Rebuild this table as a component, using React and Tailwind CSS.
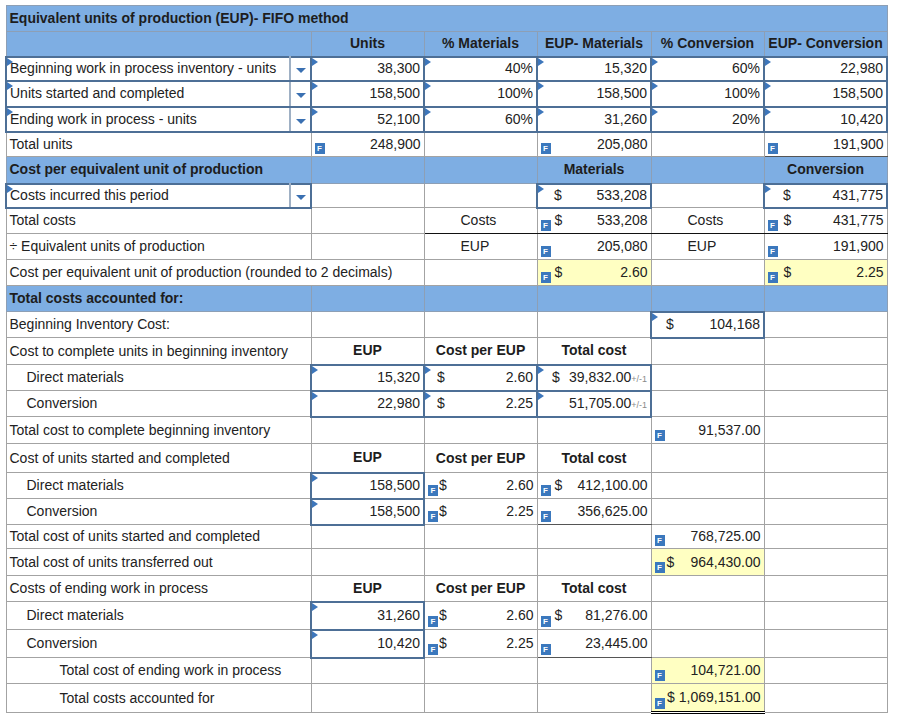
import React from "react";

const blueRow = "bg-[#7eaee3]";

function Tri() {
  return (
    <span className="absolute left-0 top-0 h-0 w-0 border-y-[4px] border-l-[6px] border-y-transparent border-l-[#3d76bb]" />
  );
}

function FBadge() {
  return (
    <span className="absolute bottom-[2px] left-[3px] flex h-[11px] w-[10px] items-center justify-center bg-[#3b78bd] text-[8px] font-bold leading-none text-white">
      F
    </span>
  );
}

function Caret() {
  return (
    <span className="inline-block h-0 w-0 border-x-[5px] border-t-[5px] border-x-transparent border-t-[#3a70b2]" />
  );
}

function Cell({ children, className = "", input, tri, f, yellow, blue, colSpan }) {
  let border = "border border-[#a3a3a3]";
  if (blue) border = "border border-[#8d9fb5] bg-[#7eaee3]";
  if (input) border = "border-2 border-[#4d6f96]";
  return (
    <td
      colSpan={colSpan}
      className={`relative p-0 ${border} ${yellow ? "bg-[#ffffc2]" : ""} ${className}`}
    >
      {tri && <Tri />}
      {f && <FBadge />}
      {children}
    </td>
  );
}

function Num({ children }) {
  return <div className="pr-[3px] text-right">{children}</div>;
}

function Dollar({ value, pl = "pl-[14px]", extra }) {
  return (
    <div className={`flex items-center justify-between pr-[3px] ${pl}`}>
      <span>$</span>
      <span>
        {value}
        {extra}
      </span>
    </div>
  );
}

const Plus = () => <span className="text-[9px] text-[#8a8a8a]">+/-1</span>;

function Label({ children, indent = "pl-[3px]" }) {
  return <div className={`whitespace-nowrap ${indent}`}>{children}</div>;
}

function Head({ children }) {
  return <div className="text-center font-bold text-[#1d1d1d]">{children}</div>;
}

function InputRow({ h, label, units, pm, em, pc, ec }) {
  return (
    <tr className={h}>
      <Cell input tri className="border-r-[#9fb0c4]">
        <Label>{label}</Label>
      </Cell>
      <Cell input className="text-center">
        <Caret />
      </Cell>
      <Cell input tri><Num>{units}</Num></Cell>
      <Cell input tri><Num>{pm}</Num></Cell>
      <Cell input tri><Num>{em}</Num></Cell>
      <Cell input tri><Num>{pc}</Num></Cell>
      <Cell input tri><Num>{ec}</Num></Cell>
    </tr>
  );
}

function Empty({ n = 1 }) {
  return Array.from({ length: n }).map((_, i) => <Cell key={i} />);
}

export default function App() {
  return (
    <div className="bg-white pl-[5px] pt-[5px] font-['Liberation_Sans',Arial,sans-serif] text-[14px] text-[#222]">
      <table className="w-[881px] table-fixed border-collapse">
        <colgroup>
          <col className="w-[284px]" />
          <col className="w-[21px]" />
          <col className="w-[113px]" />
          <col className="w-[113px]" />
          <col className="w-[114px]" />
          <col className="w-[113px]" />
          <col className="w-[123px]" />
        </colgroup>
        <tbody>
          <tr className="h-[26px]">
            <Cell blue colSpan={7}>
              <div className="pl-[3px] font-bold text-[#1d1d1d]">
                Equivalent units of production (EUP)- FIFO method
              </div>
            </Cell>
          </tr>
          <tr className="h-[25px]">
            <Cell blue colSpan={2} />
            <Cell blue><Head>Units</Head></Cell>
            <Cell blue><Head>% Materials</Head></Cell>
            <Cell blue><Head>EUP- Materials</Head></Cell>
            <Cell blue><Head>% Conversion</Head></Cell>
            <Cell blue><Head>EUP- Conversion</Head></Cell>
          </tr>
          <InputRow h="h-[24px]" label="Beginning work in process inventory - units" units="38,300" pm="40%" em="15,320" pc="60%" ec="22,980" />
          <InputRow h="h-[26px]" label="Units started and completed" units="158,500" pm="100%" em="158,500" pc="100%" ec="158,500" />
          <InputRow h="h-[25px]" label="Ending work in process - units" units="52,100" pm="60%" em="31,260" pc="20%" ec="10,420" />
          <tr className="h-[25px]">
            <Cell colSpan={2}><Label>Total units</Label></Cell>
            <Cell f><Num>248,900</Num></Cell>
            <Cell />
            <Cell f><Num>205,080</Num></Cell>
            <Cell />
            <Cell f className="border-b-[#555]"><Num>191,900</Num></Cell>
          </tr>

          <tr className="h-[27px]">
            <Cell blue colSpan={2}>
              <div className="pl-[3px] font-bold text-[#1d1d1d]">Cost per equivalent unit of production</div>
            </Cell>
            <Cell blue />
            <Cell blue />
            <Cell blue><Head>Materials</Head></Cell>
            <Cell blue />
            <Cell blue><Head>Conversion</Head></Cell>
          </tr>
          <tr className="h-[24px]">
            <Cell input tri className="border-r-[#9fb0c4]">
              <Label>Costs incurred this period</Label>
            </Cell>
            <Cell input className="text-center">
              <Caret />
            </Cell>
            <Empty n={2} />
            <Cell input tri><Dollar value="533,208" pl="pl-[16px]" /></Cell>
            <Cell />
            <Cell input tri><Dollar value="431,775" pl="pl-[18px]" /></Cell>
          </tr>
          <tr className="h-[26px]">
            <Cell colSpan={2}><Label>Total costs</Label></Cell>
            <Cell />
            <Cell className="border-b-[#111]"><div className="pl-[36px]">Costs</div></Cell>
            <Cell f className="border-b-[#111]"><Dollar value="533,208" pl="pl-[17px]" /></Cell>
            <Cell className="border-b-[#111]"><div className="pl-[36px]">Costs</div></Cell>
            <Cell f className="border-b-[#111]"><Dollar value="431,775" pl="pl-[19px]" /></Cell>
          </tr>
          <tr className="h-[26px]">
            <Cell colSpan={2}><Label>÷ Equivalent units of production</Label></Cell>
            <Cell />
            <Cell><div className="pl-[36px]">EUP</div></Cell>
            <Cell f><Num>205,080</Num></Cell>
            <Cell><div className="pl-[36px]">EUP</div></Cell>
            <Cell f><Num>191,900</Num></Cell>
          </tr>
          <tr className="h-[26px]">
            <Cell colSpan={3}><Label>Cost per equivalent unit of production (rounded to 2 decimals)</Label></Cell>
            <Cell />
            <Cell f yellow><Dollar value="2.60" pl="pl-[17px]" /></Cell>
            <Cell />
            <Cell f yellow><Dollar value="2.25" pl="pl-[19px]" /></Cell>
          </tr>

          <tr className="h-[26px]">
            <Cell blue colSpan={2}>
              <div className="pl-[3px] font-bold text-[#1d1d1d]">Total costs accounted for:</div>
            </Cell>
            <Cell blue />
            <Cell blue />
            <Cell blue />
            <Cell blue />
            <Cell blue />
          </tr>
          <tr className="h-[26px]">
            <Cell colSpan={2}><Label>Beginning Inventory Cost:</Label></Cell>
            <Empty n={3} />
            <Cell input tri><Dollar value="104,168" pl="pl-[14px]" /></Cell>
            <Cell />
          </tr>
          <tr className="h-[27px]">
            <Cell colSpan={2}><Label>Cost to complete units in beginning inventory</Label></Cell>
            <Cell><Head>EUP</Head></Cell>
            <Cell><Head>Cost per EUP</Head></Cell>
            <Cell><Head>Total cost</Head></Cell>
            <Empty n={2} />
          </tr>
          <tr className="h-[26px]">
            <Cell colSpan={2}><Label indent="pl-[20px]">Direct materials</Label></Cell>
            <Cell input tri><Num>15,320</Num></Cell>
            <Cell input tri><Dollar value="2.60" pl="pl-[12px]" /></Cell>
            <Cell input tri><Dollar value="39,832.00" pl="pl-[14px]" extra={<Plus />} /></Cell>
            <Empty n={2} />
          </tr>
          <tr className="h-[26px]">
            <Cell colSpan={2}><Label indent="pl-[20px]">Conversion</Label></Cell>
            <Cell input tri><Num>22,980</Num></Cell>
            <Cell input tri><Dollar value="2.25" pl="pl-[12px]" /></Cell>
            <Cell input tri><Num>51,705.00<Plus /></Num></Cell>
            <Empty n={2} />
          </tr>
          <tr className="h-[27px]">
            <Cell colSpan={2}><Label>Total cost to complete beginning inventory</Label></Cell>
            <Empty n={3} />
            <Cell f><Num>91,537.00</Num></Cell>
            <Cell />
          </tr>
          <tr className="h-[29px]">
            <Cell colSpan={2}><Label>Cost of units started and completed</Label></Cell>
            <Cell><Head>EUP</Head></Cell>
            <Cell><Head>Cost per EUP</Head></Cell>
            <Cell><Head>Total cost</Head></Cell>
            <Empty n={2} />
          </tr>
          <tr className="h-[26px]">
            <Cell colSpan={2}><Label indent="pl-[20px]">Direct materials</Label></Cell>
            <Cell input tri><Num>158,500</Num></Cell>
            <Cell f><Dollar value="2.60" pl="pl-[14px]" /></Cell>
            <Cell f><Dollar value="412,100.00" pl="pl-[17px]" /></Cell>
            <Empty n={2} />
          </tr>
          <tr className="h-[26px]">
            <Cell colSpan={2}><Label indent="pl-[20px]">Conversion</Label></Cell>
            <Cell input tri><Num>158,500</Num></Cell>
            <Cell f><Dollar value="2.25" pl="pl-[14px]" /></Cell>
            <Cell f className="border-b-[#555]"><Num>356,625.00</Num></Cell>
            <Empty n={2} />
          </tr>
          <tr className="h-[24px]">
            <Cell colSpan={2}><Label>Total cost of units started and completed</Label></Cell>
            <Empty n={3} />
            <Cell f><Num>768,725.00</Num></Cell>
            <Cell />
          </tr>
          <tr className="h-[27px]">
            <Cell colSpan={2}><Label>Total cost of units transferred out</Label></Cell>
            <Empty n={3} />
            <Cell f yellow><Dollar value="964,430.00" pl="pl-[15px]" /></Cell>
            <Cell />
          </tr>
          <tr className="h-[26px]">
            <Cell colSpan={2}><Label>Costs of ending work in process</Label></Cell>
            <Cell><Head>EUP</Head></Cell>
            <Cell><Head>Cost per EUP</Head></Cell>
            <Cell><Head>Total cost</Head></Cell>
            <Empty n={2} />
          </tr>
          <tr className="h-[28px]">
            <Cell colSpan={2}><Label indent="pl-[20px]">Direct materials</Label></Cell>
            <Cell input tri><Num>31,260</Num></Cell>
            <Cell f><Dollar value="2.60" pl="pl-[14px]" /></Cell>
            <Cell f><Dollar value="81,276.00" pl="pl-[17px]" /></Cell>
            <Empty n={2} />
          </tr>
          <tr className="h-[28px]">
            <Cell colSpan={2}><Label indent="pl-[20px]">Conversion</Label></Cell>
            <Cell input tri><Num>10,420</Num></Cell>
            <Cell f><Dollar value="2.25" pl="pl-[14px]" /></Cell>
            <Cell f className="border-b-[#555]"><Num>23,445.00</Num></Cell>
            <Empty n={2} />
          </tr>
          <tr className="h-[26px]">
            <Cell colSpan={2}><Label indent="pl-[53px]">Total cost of ending work in process</Label></Cell>
            <Empty n={3} />
            <Cell f yellow><Num>104,721.00</Num></Cell>
            <Cell />
          </tr>
          <tr className="h-[29px]">
            <Cell colSpan={2}><Label indent="pl-[53px]">Total costs accounted for</Label></Cell>
            <Empty n={3} />
            <Cell f yellow className="border-b-[3px] border-b-black border-double">
              <div className="flex items-center justify-end gap-[4px] pr-[3px]">
                <span>$</span>
                <span>1,069,151.00</span>
              </div>
            </Cell>
            <Cell />
          </tr>
        </tbody>
      </table>
    </div>
  );
}
